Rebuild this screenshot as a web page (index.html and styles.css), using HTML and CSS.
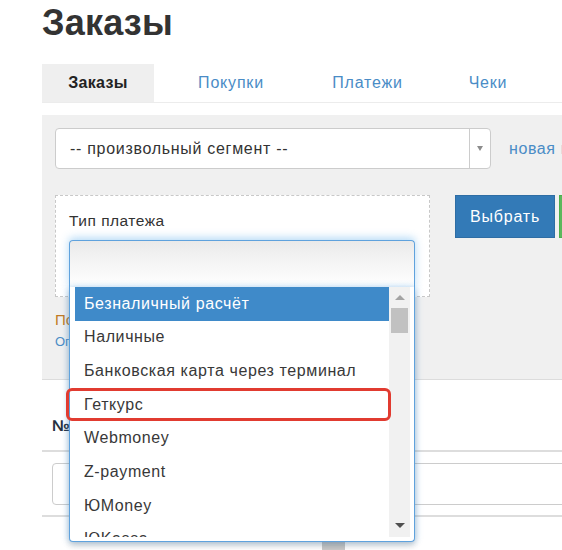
FILE: index.html
```html
<!DOCTYPE html>
<html lang="ru">
<head>
<meta charset="utf-8">
<title>Заказы</title>
<link rel="stylesheet" href="styles.css">
</head>
<body>
<div class="page">
  <h1 class="title">Заказы</h1>
  <div class="tabs">
    <div class="tab tab-active">Заказы</div>
    <a class="tab tab-1">Покупки</a>
    <a class="tab tab-2">Платежи</a>
    <a class="tab tab-3">Чеки</a>
  </div>

  <div class="panel">
    <div class="seg-row">
      <div class="seg-select">
        <span class="seg-text">-- произвольный сегмент --</span>
        <span class="seg-arrow"><i class="tri-down"></i></span>
      </div>
      <a class="seg-link">новая группа</a>
    </div>

    <div class="filter-row">
      <div class="filter-col">
        <div class="filter-box">
          <div class="filter-label">Тип платежа</div>
          <div class="combo">
            <div class="combo-field"></div>
            <div class="combo-drop">
              <div class="combo-list">
                <ul class="options">
                  <li class="option option-hl">Безналичный расчёт</li>
                  <li class="option">Наличные</li>
                  <li class="option">Банковская карта через терминал</li>
                  <li class="option">Геткурс</li>
                  <li class="option">Webmoney</li>
                  <li class="option">Z-payment</li>
                  <li class="option">ЮMoney</li>
                  <li class="option">ЮKassa</li>
                </ul>
                <div class="scrollbar">
                  <i class="sb-up"></i>
                  <div class="sb-thumb"></div>
                  <div class="sb-track"></div>
                  <i class="sb-down"></i>
                </div>
              </div>
              <div class="mark"></div>
            </div>
          </div>
        </div>
        <div class="hint">Показать все условия</div>
        <a class="hint-link">Ограничить выборку</a>
      </div>
      <button class="btn btn-primary">Выбрать</button>
      <button class="btn btn-success">Сохранить</button>
    </div>
  </div>

  <div class="grid">
    <div class="grid-head"><span class="col-num">№</span></div>
    <div class="grid-filter"><div class="grid-input"></div></div>
  </div>
  <div class="grid-footer"><div class="footer-chip"></div></div>
</div>
</body>
</html>
```

FILE: styles.css
```css
* { box-sizing: border-box; }
html, body { margin: 0; padding: 0; overflow: hidden; background: #fff; }
body {
  font-family: "Liberation Sans", Arial, sans-serif;
  color: #333;
  width: 562px;
  height: 550px;
}
.page { padding-left: 42px; }

.title {
  margin: 0;
  padding-top: 1px;
  font-size: 36px;
  line-height: 44px;
  font-weight: bold;
  color: #333;
  letter-spacing: 0.2px;
}

.tabs {
  margin-top: 19px;
  display: flex;
  height: 39px;
  border-bottom: 1px solid #ececec;
  white-space: nowrap;
}
.tab {
  flex-shrink: 0;
  display: flex;
  align-items: center;
  justify-content: center;
  height: 38px;
  font-size: 16px;
  letter-spacing: 0.8px;
  color: #4a8cc6;
}
.tab-active {
  width: 112px;
  background: #efefef;
  color: #222;
  font-weight: bold;
  letter-spacing: 0.3px;
}
.tab-1 { width: 154px; }
.tab-2 { width: 119px; }
.tab-3 { width: 122px; }

.panel {
  margin-top: 12px;
  height: 265px;
  background: #f0f0f0;
  border-bottom: 1px solid #dcdcdc;
  padding: 13px 0 0 13px;
}

.seg-row {
  display: flex;
  align-items: center;
  gap: 18px;
  white-space: nowrap;
}
.seg-select {
  flex-shrink: 0;
  display: flex;
  width: 436px;
  height: 41px;
  background: #fff;
  border: 1px solid #ccc;
  border-radius: 4px;
}
.seg-text {
  flex: 1;
  display: flex;
  align-items: center;
  padding-left: 14px;
  font-size: 16px;
  letter-spacing: 0.7px;
  color: #333;
}
.seg-arrow {
  width: 21px;
  border-left: 1px solid #ccc;
  display: flex;
  align-items: center;
  justify-content: center;
}
.tri-down {
  width: 0; height: 0;
  border-left: 3.5px solid transparent;
  border-right: 3.5px solid transparent;
  border-top: 5px solid #8c8c8c;
}
.seg-link { flex-shrink: 0; font-size: 16px; letter-spacing: 0.6px; color: #4a8cc6; }

.filter-row {
  margin-top: 26px;
  display: flex;
  align-items: flex-start;
  white-space: nowrap;
}
.filter-col { flex-shrink: 0; width: 375px; }
.filter-box {
  width: 375px;
  height: 102px;
  background: #fff;
  border: 1px dashed #c8c8c8;
  padding: 16px 14px 0 13px;
}
.filter-label {
  font-size: 15.5px;
  line-height: 18px;
  letter-spacing: 0.5px;
  color: #333;
}
.combo {
  position: relative;
  margin-top: 10px;
  width: 346px;
}
.combo-field {
  height: 47px;
  border: 1px solid #5fa2dd;
  border-bottom: none;
  border-radius: 4px 4px 0 0;
  background: linear-gradient(to bottom, #eaeaea 0%, #f1f1f1 30%, #ffffff 100%);
  box-shadow: 0 -2px 8px rgba(82, 168, 236, 0.45);
}
.combo-drop {
  position: absolute;
  left: 0;
  top: 47px;
  width: 346px;
  height: 255px;
  background: #fff;
  border: 1px solid #5fa2dd;
  border-top: none;
  border-radius: 0 0 4px 4px;
  padding: 0 4px 4px 5px;
  box-shadow: 0 4px 6px rgba(0, 0, 0, 0.16), 2px 0 6px rgba(82, 168, 236, 0.25), -2px 0 6px rgba(82, 168, 236, 0.25);
  z-index: 5;
}
.combo-list {
  display: flex;
  height: 250px;
  overflow: hidden;
}
.options {
  list-style: none;
  margin: 0;
  padding: 0;
  width: 314px;
  flex-shrink: 0;
}
.option {
  height: 33.67px;
  display: flex;
  align-items: center;
  padding-left: 9px;
  font-size: 16px;
  letter-spacing: 0.6px;
  color: #383838;
}
.option-hl { background: #3f8ac9; color: #fff; }

.scrollbar {
  position: relative;
  flex-shrink: 0;
  width: 21px;
  background: #f1f1f1;
  display: flex;
  flex-direction: column;
  align-items: center;
}
.sb-up {
  margin-top: 8px;
  width: 0; height: 0;
  border-left: 5px solid transparent;
  border-right: 5px solid transparent;
  border-bottom: 5px solid #a3a3a3;
}
.sb-thumb {
  margin-top: 8px;
  width: 17px;
  height: 25px;
  background: #c1c1c1;
}
.sb-track { flex: 1; }
.sb-down {
  margin-bottom: 9px;
  width: 0; height: 0;
  border-left: 5px solid transparent;
  border-right: 5px solid transparent;
  border-top: 5px solid #505050;
}

.mark {
  position: absolute;
  left: -4px;
  top: 101px;
  width: 325px;
  height: 33px;
  border: 3px solid #e13b30;
  border-radius: 6px;
}

.hint {
  margin-top: 14px;
  font-size: 15px;
  line-height: 18px;
  color: #c07a24;
}
.hint-link {
  display: block;
  margin-top: 5px;
  font-size: 13px;
  line-height: 16px;
  color: #4a8cc6;
}

.btn {
  flex-shrink: 0;
  height: 43px;
  font-family: "Liberation Sans", Arial, sans-serif;
  font-size: 16px;
  letter-spacing: 0.8px;
  color: #fff;
  border-radius: 0;
  padding: 0;
}
.btn-primary {
  margin-left: 25px;
  width: 100px;
  background: #337ab7;
  border: 1px solid #2e6da4;
}
.btn-success {
  margin-left: 4px;
  width: 100px;
  background: #5cb85c;
  border: 1px solid #4cae4c;
}

.grid { width: 600px; }
.grid-head {
  padding: 36px 0 14px 10px;
  border-bottom: 2px solid #dddddd;
}
.col-num {
  display: block;
  font-size: 16px;
  line-height: 20px;
  font-weight: bold;
  color: #263140;
}
.grid-filter {
  padding: 11px 0 10px 10px;
  border-bottom: 2px solid #dddddd;
}
.grid-input {
  width: 600px;
  height: 42px;
  border: 1px solid #ccc;
  border-radius: 4px;
  background: #fff;
}
.grid-footer { padding: 25px 0 0 280px; }
.footer-chip {
  width: 23px;
  height: 12px;
  background: #c9c9c9;
}
```
